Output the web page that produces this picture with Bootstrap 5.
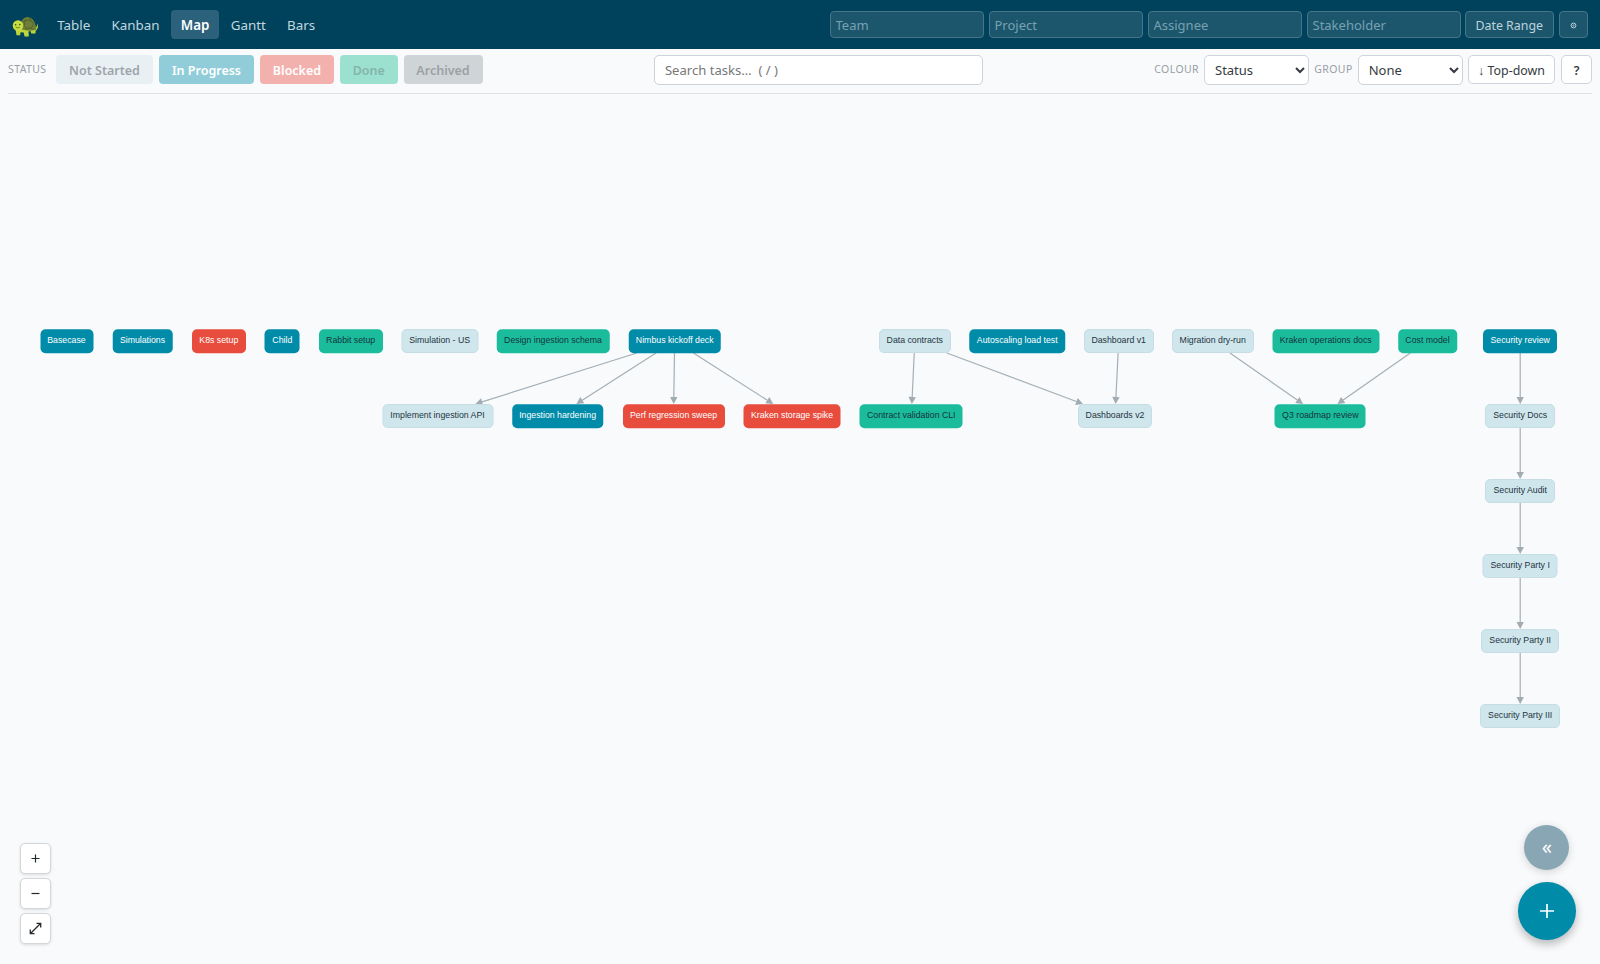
<!DOCTYPE html>
<html lang="en">
<head>
<meta charset="utf-8">
<meta name="viewport" content="width=device-width, initial-scale=1">
<title>Task map</title>
<link href="https://cdn.jsdelivr.net/npm/bootstrap@5.3.0/dist/css/bootstrap.min.css" rel="stylesheet">
<style>
body{font-family:"Noto Sans",sans-serif;background:#f8fafc;height:100vh;overflow:hidden;font-size:14px;color:#212529}
.topbar{background:#00425c;height:49px;padding:0 12px}
.topbar .nav{gap:1.2px;margin-left:7.2px}
.topbar .nav-link{color:#c2d7df;font-size:13.4px;line-height:21px;padding:5px 10px 3px;border-radius:4px}
.topbar .nav-link.active{background:#2b617a;color:#fff;font-weight:600}
.filters{gap:5px}
.filters .form-control,.filters .btn{height:27px;background:#1c566d;border:1px solid #447588;border-radius:4px;color:#bdd3dc;font-size:13px;line-height:19px;padding:3px 5px}
.filters .form-control{width:154px}
.filters .form-control::placeholder{color:#78a1b1;opacity:1}
.filters .btn{padding:4px 0 2px;font-size:12.4px}
.filters .dates{width:89.5px;margin-left:-1px}
.filters .gear{width:29px}
.toolrow{height:45px;margin:0 8px;border-bottom:1px solid #dee2e6;padding-top:6.3px}
.cap{font-size:10.5px;letter-spacing:.4px;color:#999fa3;line-height:28px;margin-right:5px}
.chip{height:29px;line-height:31px;border-radius:4px;font-size:12.5px;font-weight:600;text-align:center}
.chip+.chip{margin-left:6px}
.c-ns{width:97px;background:#e9f0f4;color:#9da5aa}
.c-ip{width:95px;background:#91cdd8;color:#fff}
.c-bl{width:74px;background:#f3b1ad;color:#fff}
.c-dn{width:57.5px;background:#9ce0d0;color:#84b5aa}
.c-ar{width:79px;background:#cfd4d6;color:#9ba1a4}
.statuses{width:646.4px}
.statuses .cap{width:43px}
.search{width:328.4px;height:30px;font-size:13.1px;line-height:20px;padding:3px 9.5px;border:1px solid #ced4d6;border-radius:5px}
.search::placeholder{color:#777;opacity:1}
.pick{height:30px;width:105px;background:#fff;border:1px solid #ced4da;border-radius:5px;font-size:13px;color:#343a40;padding:0 6px;margin-right:5.3px}
.tool{height:29px;background:#fff;border:1px solid #ced4da;border-radius:5px;font-size:12.4px;line-height:19px;padding:5px 0 3px;color:#343a40}
.orient{width:87px;margin-right:6px}
.help{width:31px}
.canvas{position:absolute;inset:0;pointer-events:none}
.node{position:absolute;transform:translate(-50%,-50%);font:8.76px/23px "Liberation Sans",Arial,sans-serif;height:23.6px;border-radius:5px;white-space:nowrap;text-align:center}
.n-ip{background:#008ba8;color:#fff}
.n-bl{background:#e74c3c;color:#fff}
.n-dn{background:#1abc9c;color:#17343d}
.n-ns{background:#d0e6ed;color:#1d3440;border:1px solid #c6dde5;height:24px;line-height:21.5px}
.zoomers{position:absolute;left:20.4px;bottom:20px;gap:4px}
.zoomers .btn{width:31px;height:31px;padding:0;background:#fff;border:1px solid #d3d7da;border-radius:5px;box-shadow:0 1px 3px rgba(0,0,0,.12)}
.fabs{position:absolute;right:24.4px;bottom:24.4px;gap:12.4px}
.fab{border-radius:50%;color:#fff;line-height:1}
.fab-sm{width:45px;height:45px;background:#89a6b4;font-size:20px;box-shadow:0 2px 8px rgba(0,0,0,.16)}
.fab-lg{width:57.6px;height:57.6px;background:#008ba8;box-shadow:0 4px 10px rgba(0,0,0,.28)}
</style>
</head>
<body class="position-relative">
<nav class="topbar d-flex align-items-center">
  <svg width="28" height="24" viewBox="0 0 28 24" aria-label="Turtle">
    <path d="M22 15q3 0 3.500-4.500 2 5-3 8z" fill="#b5cc3a"/>
    <path d="M6 14h16q2 2 1.500 6.500h-4.200L18.500 18l-2 .6.3 4.900h-4.300l-.8-4-3.200-.3-.3 3H4.500L3.500 16z" fill="#bcd53c"/>
    <path d="M8.500 14Q9 4 15.500 4t8.500 10q1 2.500-1 3-7 1.500-13-.5z" fill="#6f7f37"/>
    <path d="M10 9.500L13.500 7l5 .3 3 3.200M13.500 7l-1.500 5.500 2.500 3 5-.5 2-4.500-3-3.200-1-2.800M14.500 15.500l-.7 1.200M19.500 15l1.500 1.500" fill="none" stroke="#4d5d28" stroke-width=".8"/>
    <circle cx="6" cy="12.500" r="5.300" fill="#c5dd40"/>
    <circle cx="3.600" cy="11.700" r=".8" fill="#39451f"/><circle cx="7.800" cy="11.500" r=".8" fill="#39451f"/>
    <path d="M3.800 14q2 2 4 0" fill="none" stroke="#59652a" stroke-width=".8"/>
  </svg>
  <div class="nav">
    <a class="nav-link">Table</a><a class="nav-link">Kanban</a><a class="nav-link active">Map</a><a class="nav-link">Gantt</a><a class="nav-link">Bars</a>
  </div>
  <div class="filters d-flex ms-auto">
    <input class="form-control" placeholder="Team"><input class="form-control" placeholder="Project"><input class="form-control" placeholder="Assignee"><input class="form-control" placeholder="Stakeholder">
    <button class="btn dates">Date Range</button>
    <button class="btn gear d-flex align-items-center justify-content-center"><svg width="7" height="7" viewBox="0 0 7 7" fill="none" stroke="#bdd3dc"><circle cx="3.500" cy="3.500" r="2.400"/><circle cx="3.500" cy="3.500" r=".7" stroke-width=".7"/></svg></button>
  </div>
</nav>
<div class="toolrow d-flex">
  <div class="d-flex statuses flex-shrink-0"><span class="cap">STATUS</span><span class="chip c-ns">Not Started</span><span class="chip c-ip">In Progress</span><span class="chip c-bl">Blocked</span><span class="chip c-dn">Done</span><span class="chip c-ar">Archived</span></div>
  <input class="form-control search" placeholder="Search tasks…  ( / )">
  <div class="d-flex ms-auto"><span class="cap">COLOUR</span><select class="pick"><option>Status</option></select><span class="cap">GROUP</span><select class="pick"><option>None</option></select><button class="btn tool orient">↓ Top-down</button><button class="btn tool help fw-semibold">?</button></div>
</div>
<main class="canvas" id="map"><svg width="1600" height="964" id="edges"></svg></main>
<div class="zoomers d-flex flex-column">
  <button class="btn d-flex align-items-center justify-content-center"><svg width="9" height="9" viewBox="0 0 9 9" stroke="#24292d" stroke-width="1.200"><path d="M4.500 .5v8M.5 4.500h8"/></svg></button>
  <button class="btn d-flex align-items-center justify-content-center"><svg width="9" height="9" viewBox="0 0 9 9" stroke="#24292d" stroke-width="1.200"><path d="M.5 4.500h8"/></svg></button>
  <button class="btn d-flex align-items-center justify-content-center"><svg width="13" height="13" viewBox="0 0 13 13" fill="none" stroke="#24292d" stroke-width="1.300"><path d="M1.500 11.500l10-10M7.500 1.300h4.200v4.200M1.300 7.500v4.200h4.200"/></svg></button>
</div>
<div class="fabs d-flex flex-column align-items-center">
  <div class="fab fab-sm d-flex align-items-center justify-content-center">«</div>
  <div class="fab fab-lg d-flex align-items-center justify-content-center"><svg width="14" height="14" viewBox="0 0 14 14" stroke="#fff" stroke-width="1.700"><path d="M7 0v14M0 7h14"/></svg></div>
</div>
<script src="https://cdn.jsdelivr.net/npm/bootstrap@5.3.0/dist/js/bootstrap.bundle.min.js"></script>
<script>
// each node: label, status, centre x, centre y, width
const nodes = [
 ["Basecase","ip",66.5,341,53],["Simulations","ip",142.5,341,60.5],["K8s setup","bl",218.8,341,54],["Child","ip",282.3,341,35],
 ["Rabbit setup","dn",350.7,341,64],["Simulation - US","ns",439.7,341,77],["Design ingestion schema","dn",553,341,112.5],["Nimbus kickoff deck","ip",674.7,341,92.5],
 ["Data contracts","ns",914.8,341,72],["Autoscaling load test","ip",1017.2,341,95.5],["Dashboard v1","ns",1118.7,341,70],["Migration dry-run","ns",1212.7,341,82],
 ["Kraken operations docs","dn",1325.7,341,107],["Cost model","dn",1427.5,341,59.5],["Security review","ip",1520.2,341,74],
 ["Implement ingestion API","ns",437.5,416,111],["Ingestion hardening","ip",557.6,416,91.5],["Perf regression sweep","bl",673.5,416,102],["Kraken storage spike","bl",792,416,97],
 ["Contract validation CLI","dn",911.3,416,103],["Dashboards v2","ns",1115,416,74],["Q3 roadmap review","dn",1320.3,416,91],
 ["Security Docs","ns",1520.2,416,70],["Security Audit","ns",1520.2,491,70],["Security Party I","ns",1520.2,566,75],["Security Party II","ns",1520.2,641,78],["Security Party III","ns",1520.2,716,80]];
const edges = [[7,15],[7,16],[7,17],[7,18],[8,19],[8,20],[10,20],[11,21],[13,21],[14,22],[22,23],[23,24],[24,25],[25,26]];
const map = document.getElementById("map");
for (const [t,s,x,y,w] of nodes) {
  const d = document.createElement("div");
  d.className = "node n-" + s; d.textContent = t;
  d.style.cssText = `left:${x}px;top:${y}px;width:${w}px`;
  map.append(d);
}
let out = "";
for (const [a,b] of edges) {
  const [,,x1,y1] = nodes[a], [,,x2,y2] = nodes[b], dx = x2-x1, dy = y2-y1, L = Math.hypot(dx,dy), ux = dx/L, uy = dy/L;
  const sx = x1+dx*.16, sy = y1+12, ex = x2-dx*.16, ey = y2-12, bx = ex-ux*7, by = ey-uy*7;
  out += `<path d="M${sx} ${sy}L${bx} ${by}" stroke="#a4afb6" stroke-width="1.2"/><path d="M${ex} ${ey}L${bx-uy*3.7} ${by+ux*3.7}L${bx+uy*3.7} ${by-ux*3.7}z" fill="#a0abb2"/>`;
}
document.getElementById("edges").innerHTML = out;
</script>
</body>
</html>
